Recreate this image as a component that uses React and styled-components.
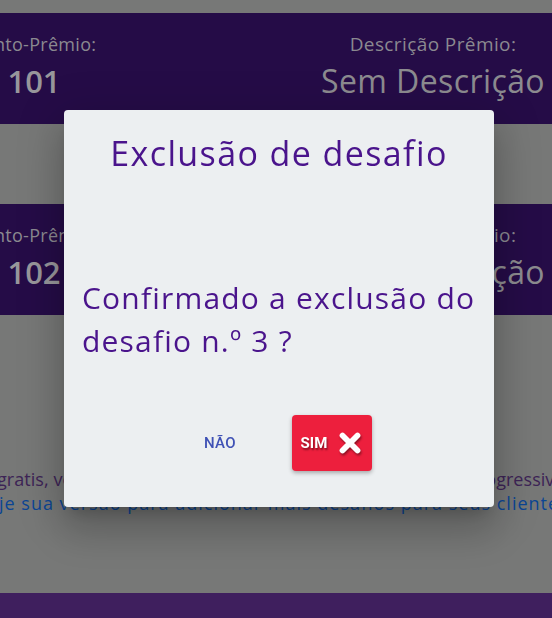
import React from "react";
import styled, { createGlobalStyle } from "styled-components";

const GlobalStyle = createGlobalStyle`
  html, body {
    margin: 0;
    padding: 0;
    background: #777877;
    overflow: hidden;
  }
  body {
    font-family: "Open Sans", "Liberation Sans", sans-serif;
  }
`;

const prizes = [
  { points: 101, description: "Sem Descrição" },
  { points: 102, description: "Sem Descrição" },
];

const App = () => {
  return (
    <>
      <GlobalStyle />
      <Page>
        <CardList>
          {prizes.map((item) => (
            <PrizeCard key={item.points}>
              <Column $width={140} $shift={-36}>
                <Label>Ponto-Prêmio:</Label>
                <Points>{item.points}</Points>
              </Column>
              <Column $width={260} $shift={199}>
                <Label $wide>Descrição Prêmio:</Label>
                <Description>{item.description}</Description>
              </Column>
            </PrizeCard>
          ))}
        </CardList>

        <Notice>
          <NoticeLine $color="#3d2456" $shift={-3} $spacing={0.05}>
            gratis, você pode cadastrar apenas 3 desafios de forma progressiva.
          </NoticeLine>
          <NoticeLine $color="#0b4594" $shift={-1} $spacing={1}>
            je sua versão para adicionar mais desafios para seus clientes
          </NoticeLine>
        </Notice>

        <Footer />
      </Page>

      <Dialog role="dialog">
        <Title>Exclusão de desafio</Title>
        <Message>Confirmado a exclusão do desafio n.º 3 ?</Message>
        <Actions>
          <TextButton>Não</TextButton>
          <DangerButton>
            <span>Sim</span>
            <svg viewBox="0 0 24 24" width="30" height="30">
              <path
                d="M6 6 L18 18 M18 6 L6 18"
                stroke="#fff"
                strokeWidth="4.6"
                strokeLinecap="round"
                fill="none"
              />
            </svg>
          </DangerButton>
        </Actions>
      </Dialog>
    </>
  );
};

export default App;

const Page = styled.div`
  width: 552px;
  height: 618px;
  display: flex;
  flex-direction: column;
  padding-top: 13px;
  box-sizing: border-box;
  overflow: hidden;
`;

const CardList = styled.div`
  display: flex;
  flex-direction: column;
  gap: 80px;
`;

const PrizeCard = styled.div`
  height: 111px;
  background: #250c47;
  display: flex;
  align-items: flex-start;
  padding-top: 19px;
  box-sizing: border-box;
`;

const Column = styled.div`
  width: ${(p) => p.$width}px;
  flex-shrink: 0;
  margin-left: ${(p) => p.$shift}px;
  display: flex;
  flex-direction: column;
  align-items: center;
  white-space: nowrap;
`;

const Label = styled.div`
  font-size: ${(p) => (p.$wide ? 19 : 18)}px;
  letter-spacing: ${(p) => (p.$wide ? 0.4 : 0.3)}px;
  line-height: 24px;
  color: #8b8990;
`;

const Points = styled.div`
  font-size: 31px;
  line-height: 44px;
  font-weight: 600;
  color: #98979b;
  margin-top: 3px;
`;

const Description = styled.div`
  font-size: 32px;
  letter-spacing: 0.4px;
  line-height: 44px;
  color: #8c8b8f;
  margin-top: 3px;
`;

const Notice = styled.div`
  margin-top: 152px;
  display: flex;
  flex-direction: column;
  white-space: nowrap;
`;

const NoticeLine = styled.p`
  margin: 0 0 0 ${(p) => p.$shift}px;
  font-size: 18px;
  line-height: 24px;
  letter-spacing: ${(p) => p.$spacing}px;
  color: ${(p) => p.$color};
`;

const Footer = styled.div`
  margin-top: auto;
  height: 25px;
  background: #3f1f5e;
`;

const Dialog = styled.div`
  position: fixed;
  left: 64px;
  top: 110px;
  width: 430px;
  height: 397px;
  box-sizing: border-box;
  background: #eceff1;
  border-radius: 4px;
  padding: 23px 18px 36px;
  display: flex;
  flex-direction: column;
  box-shadow: 0 11px 15px -7px rgba(0, 0, 0, 0.2),
    0 24px 38px 3px rgba(0, 0, 0, 0.14), 0 9px 46px 8px rgba(0, 0, 0, 0.12);
`;

const Title = styled.h2`
  margin: 0;
  text-align: center;
  font-size: 34px;
  letter-spacing: 1.4px;
  line-height: 40px;
  font-weight: 400;
  color: #4a148c;
  white-space: nowrap;
`;

const Message = styled.p`
  margin: 103px 0 0;
  font-size: 30px;
  letter-spacing: 1.2px;
  line-height: 43px;
  color: #4a148c;
`;

const Actions = styled.div`
  margin-top: auto;
  display: flex;
  justify-content: center;
  align-items: center;
  gap: 38px;
`;

const TextButton = styled.button`
  width: 68px;
  height: 36px;
  border: none;
  background: transparent;
  font-family: Roboto, "Liberation Sans", sans-serif;
  font-size: 15px;
  font-weight: 500;
  text-transform: uppercase;
  color: #3f51b5;
  letter-spacing: 0.4px;
  cursor: pointer;
`;

const DangerButton = styled.button`
  width: 80px;
  height: 56px;
  border: none;
  border-radius: 4px;
  background: #ed1f3d;
  display: flex;
  align-items: center;
  justify-content: center;
  gap: 8px;
  padding: 0 6px 0 8px;
  box-shadow: 0 2px 4px rgba(0, 0, 0, 0.3);
  cursor: pointer;

  span {
    font-family: Roboto, "Liberation Sans", sans-serif;
    font-size: 15px;
    font-weight: 700;
    text-transform: uppercase;
    color: #fff;
    text-shadow: 1px 2px 2px rgba(0, 0, 0, 0.45);
  }

  svg {
    flex-shrink: 0;
    filter: drop-shadow(1px 2px 1px rgba(0, 0, 0, 0.4));
  }
`;
